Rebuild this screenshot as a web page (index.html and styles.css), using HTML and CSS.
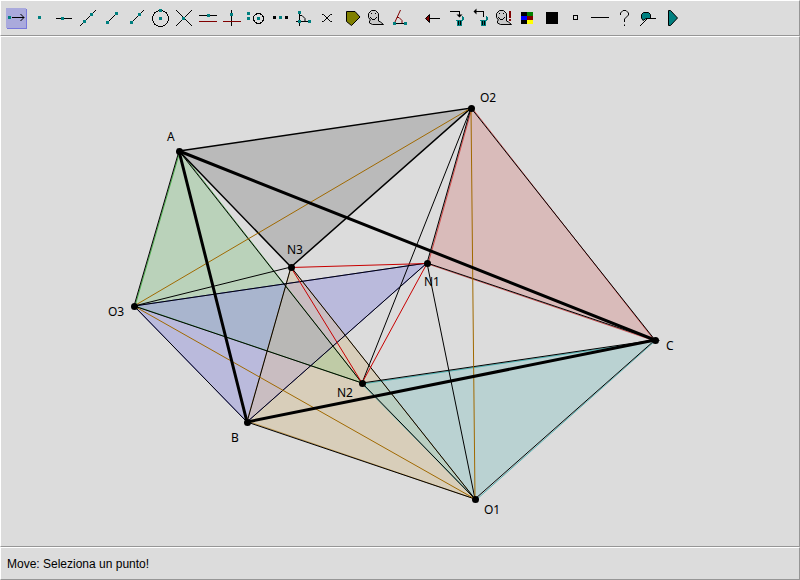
FILE: index.html
```html
<!DOCTYPE html>
<html lang="it">
<head>
<meta charset="utf-8">
<title>Geometria</title>
<link rel="stylesheet" href="styles.css">
</head>
<body>
<div class="app">
  <header class="panel toolbar">
    <div class="tools">
      <button class="tool active" aria-label="Muovi"><svg viewBox="0 0 24 24"><path class="sel-shadow" d="M3 3h20v20H3z"/><path class="sel" d="M2 2h20v20H2z"/><path class="k" d="M8 11.500h12"/><path class="k soft" d="M16.500 8l3.500 3.500-3.500 3.500"/><path class="t" d="M4 10h3v3H4z"/></svg></button>
      <button class="tool" aria-label="Punto"><svg viewBox="0 0 24 24"><path class="t" d="M10 10h3v3h-3z"/></svg></button>
      <button class="tool" aria-label="Punto su oggetto"><svg viewBox="0 0 24 24"><path class="k" d="M4 12.500h16"/><path class="t" d="M9 11h3v3H9z"/></svg></button>
      <button class="tool" aria-label="Retta"><svg viewBox="0 0 24 24"><path class="k" d="M4 20L20 4"/><path class="t" d="M7 14h3v3H7zM14 7h3v3h-3z"/></svg></button>
      <button class="tool" aria-label="Segmento"><svg viewBox="0 0 24 24"><path class="k" d="M7 17L17 7"/><path class="t" d="M6 15h3v3H6zM15 6h3v3h-3z"/></svg></button>
      <button class="tool" aria-label="Semiretta"><svg viewBox="0 0 24 24"><path class="k" d="M7 17L20 4"/><path class="t" d="M6 15h3v3H6zM14 7h3v3h-3z"/></svg></button>
      <button class="tool" aria-label="Circonferenza"><svg viewBox="0 0 24 24"><circle class="k" cx="12.500" cy="12.500" r="8"/><path class="t" d="M11 11h3v3h-3zM11 3h3v3h-3z"/></svg></button>
      <button class="tool" aria-label="Intersezione"><svg viewBox="0 0 24 24"><path class="k" d="M4 4l16 16M4 20L20 4"/><path class="t" d="M10 11h3v3h-3z"/></svg></button>
      <button class="tool" aria-label="Parallela"><svg viewBox="0 0 24 24"><path class="k" d="M3 9.500h18"/><path class="r" d="M3 15.500h18"/><path class="t" d="M11 8h3v3h-3z"/></svg></button>
      <button class="tool" aria-label="Perpendicolare"><svg viewBox="0 0 24 24"><path class="k" d="M11.500 4v16"/><path class="r" d="M3 15.500h18"/><path class="t" d="M10 7h3v3h-3z"/></svg></button>
      <button class="tool" aria-label="Compasso"><svg viewBox="0 0 24 24"><circle class="k" cx="14.500" cy="12.500" r="5"/><path class="t" d="M3 6h3v3H3zM3 11h3v3H3zM13 11h3v3h-3z"/></svg></button>
      <button class="tool" aria-label="Punto medio"><svg viewBox="0 0 24 24"><path class="b" d="M5 10h3v3H5zM17 10h3v3h-3z"/><path class="t" d="M11 10h3v3h-3z"/></svg></button>
      <button class="tool" aria-label="Angolo"><svg viewBox="0 0 24 24"><path class="k" d="M7.500 5v15M4 15.500h14"/><path class="k soft" d="M8 9.500h2l3 3v3"/><path class="t" d="M6 5h3v3H6zM6 14h3v3H6zM16 14h3v3h-3z"/></svg></button>
      <button class="tool" aria-label="Nascondi"><svg viewBox="0 0 24 24"><path class="k soft" d="M6 8.500h1.500l7 7H16M6 15.500h1.500l7-7H16"/></svg></button>
      <button class="tool" aria-label="Poligono"><svg viewBox="0 0 24 24"><path class="k olive soft" d="M6.500 5.500h8.500l5 5.500-8.500 8.500-5-4z"/></svg></button>
      <button class="tool" aria-label="Oggetti nascosti"><svg viewBox="0 0 24 24"><path class="k ghost soft" d="M4.500 7.500l3-3h4l3 3v7.500l2 1 3 2.500h-11l-3-1.500v-2l1-1-2-2.500z"/><path class="b" d="M7 7h1v1H7zM11 7h1v1h-1zM6 11h1v1H6zM7 12h1v1H7zM8 13h3v1H8zM11 12h1v1h-1zM12 11h1v1h-1z"/></svg></button>
      <button class="tool" aria-label="Ampiezza"><svg viewBox="0 0 24 24"><path class="k" d="M6 17.500h12"/><path class="r soft" d="M6.500 17l6-13M9 11.500h2l3 3V17"/><path class="t" d="M5 16h3v3H5zM16 16h3v3h-3z"/></svg></button>
    </div>
    <div class="tools">
      <button class="tool" aria-label="Indietro"><svg viewBox="0 0 24 24"><path class="k" d="M10 12.500h10"/><path class="k maroon soft" d="M5.500 12.500l4-4v8z"/></svg></button>
      <button class="tool" aria-label="Elimina"><svg viewBox="0 0 24 24"><path class="k" d="M6 5.500h9.500V10"/><path class="b soft" d="M12.500 8.500h6l-3 3z"/><path class="t" d="M12 14h6v6h-5v-5h-1zM18 10h1v1h1v3h-1v1h-2v-1h1z"/><path class="k" d="M14.500 15v4M16.500 15v4"/></svg></button>
      <button class="tool" aria-label="Ripristina"><svg viewBox="0 0 24 24"><path class="k" d="M7 5.500h8.500V11"/><path class="b soft" d="M5.500 5.500l3-3v6z"/><path class="t" d="M12 14h6v6h-5v-5h-1zM18 10h1v1h1v3h-1v1h-2v-1h1z"/><path class="k" d="M14.500 15v4M16.500 15v4"/></svg></button>
      <button class="tool" aria-label="Mostra nascosti"><svg viewBox="0 0 24 24"><path class="k ghost soft" d="M4.500 7.500l3-3h4l3 3v7.500l2 1 3 2.500h-11l-3-1.500v-2l1-1-2-2.500z"/><path class="b" d="M7 7h1v1H7zM11 7h1v1h-1zM6 11h1v1H6zM7 12h1v1H7zM8 13h3v1H8zM11 12h1v1h-1zM12 11h1v1h-1z"/><path class="m" d="M17 5h2v7h-2zM17 13h2v2h-2z"/></svg></button>
      <button class="tool" aria-label="Colore"><svg viewBox="0 0 24 24"><path class="b" d="M5 6h6v4H5zM5 14h6v4H5z"/><path class="green" d="M11 6h6v4h-6z"/><path class="blue" d="M5 10h6v4H5z"/><path class="m" d="M11 10h6v4h-6z"/><path class="yellow" d="M11 14h6v4h-6z"/></svg></button>
      <button class="tool" aria-label="Colore nero"><svg viewBox="0 0 24 24"><path class="b" d="M6 6h12v12H6z"/></svg></button>
      <button class="tool" aria-label="Tipo di punto"><svg viewBox="0 0 24 24"><path class="k" d="M9.500 9.500h4v4h-4z"/></svg></button>
      <button class="tool" aria-label="Spessore"><svg viewBox="0 0 24 24"><path class="k" d="M3 11.500h18"/></svg></button>
      <button class="tool" aria-label="Aiuto"><svg viewBox="0 0 24 24"><path class="k soft" d="M8.500 9V7l2.500-2.500h3L16.500 7v2l-4 4v3M12.500 18.500v1.500"/></svg></button>
      <button class="tool" aria-label="Macro"><svg viewBox="0 0 24 24"><path class="k teal soft" d="M7 14.500L5.500 12V8.500l2-2h5l2 2v4H10z"/><path class="k" d="M10 12.500h10M4 20l7-7"/></svg></button>
      <button class="tool" aria-label="Riproduci"><svg viewBox="0 0 24 24"><path class="k teal soft" d="M8.500 4.500h2l7 7.500-7 7.500h-2z"/></svg></button>
    </div>
  </header>

  <main class="panel drawing">
    <svg class="figure" viewBox="1 37 798 509" preserveAspectRatio="xMinYMin meet">
      <defs>
        <clipPath id="in-blue"><path d="M134 306L427 263 247 422z"/></clipPath>
        <clipPath id="in-tan"><path d="M291 267L247 422 475 499z"/></clipPath>
        <clipPath id="in-cyan"><path d="M362 383L655 340 475 499z"/></clipPath>
      </defs>
      <!-- filled triangles -->
      <path class="fill-gray" d="M179 151L471 108 291 267z"/>
      <path class="fill-blue" d="M134 306L427 263 247 422z"/>
      <path class="fill-green" d="M179 151L134 306 362 383z"/>
      <path class="fill-cyan" d="M362 383L655 340 475 499z"/>
      <path class="fill-tan" d="M291 267L247 422 475 499z"/>
      <path class="fill-red" d="M471 108L427 263 655 340z"/>
      <!-- mixed colours where triangles overlap -->
      <path class="mix-green-blue" clip-path="url(#in-blue)" d="M179 151L134 306 362 383z"/>
      <path class="mix-tan-blue" clip-path="url(#in-blue)" d="M291 267L247 422 475 499z"/>
      <g clip-path="url(#in-tan)">
        <path class="mix-green-tan" d="M179 151L134 306 362 383z"/>
        <path class="mix-all" clip-path="url(#in-blue)" d="M179 151L134 306 362 383z"/>
      </g>
      <path class="mix-tan-cyan" clip-path="url(#in-cyan)" d="M291 267L247 422 475 499z"/>
      <!-- sides -->
      <path class="side-green" d="M180 151L135 306 362 383z"/>
      <path class="side-blue" d="M134 306L427 263 247 422z"/>
      <path class="side-tan" d="M291 267L247 421 475 499z"/>
      <path class="side-cyan" d="M362 384L655 341 476 500z"/>
      <path class="side-red" d="M472 108L428 264 655 341z"/>
      <path class="side-gray" d="M179 151L471 108 291 267z"/>
      <path class="thin" d="M179 151L134 306 362 383zM134 306L427 263 247 422zM291 267L247 422 475 499zM362 383L655 340 475 499zM471 108L427 263 655 340z"/>
      <path class="thin" d="M134 306L291 267M471 108L362 383M475 499L427 263"/>
      <path class="brown" d="M134 306L471 108 475 499z"/>
      <path class="red" d="M291 267.500L427 263.500 362 383z"/>
      <path class="thick" d="M179 151L655 340 247 422z"/>
      <g class="points">
        <circle cx="179.500" cy="151.500" r="3.500"/><circle cx="471.500" cy="108.500" r="3.500"/><circle cx="655.500" cy="340.500" r="3.500"/><circle cx="475.500" cy="499.500" r="3.500"/><circle cx="247.500" cy="422.500" r="3.500"/><circle cx="134.500" cy="306.500" r="3.500"/><circle cx="291.500" cy="267.500" r="3.500"/><circle cx="427.500" cy="263.500" r="3.500"/><circle cx="362.500" cy="383.500" r="3.500"/>
      </g>
      <g class="labels">
        <text x="167" y="141">A</text><text x="480" y="102">O2</text><text x="666" y="350">C</text><text x="484" y="514">O1</text><text x="231" y="442">B</text><text x="108" y="316">O3</text><text x="287" y="254">N3</text><text x="424" y="286">N1</text><text x="337" y="397">N2</text>
      </g>
    </svg>
  </main>

  <footer class="panel status">Move: Seleziona un punto!</footer>
</div>
</body>
</html>
```
FILE: styles.css
```css
* { box-sizing: border-box; }
body {
  margin: 0;
  background: #dcdcdc;
  color: #000;
  font-family: "Liberation Sans", Arial, sans-serif;
  font-size: 12px;
}
.app {
  display: flex;
  flex-direction: column;
  min-height: 100vh;
}
.panel {
  border: 1px solid;
  border-color: #fff #969696 #969696 #fff;
  background: #dcdcdc;
}
.toolbar {
  display: flex;
  flex-wrap: wrap;
  gap: 8px;
  padding: 5px 3px;
}
.tools { display: flex; flex-wrap: wrap; }
.tool {
  width: 24px;
  height: 24px;
  padding: 0;
  border: 0;
  background: none;
}
.tool svg {
  display: block;
  width: 24px;
  height: 24px;
  shape-rendering: crispEdges;
}
.soft { shape-rendering: geometricPrecision; }
.k { fill: none; stroke: #000; }
.r { fill: none; stroke: #800000; }
.t { fill: #008080; }
.b { fill: #000; }
.m, .maroon { fill: #800000; }
.olive { fill: #808000; }
.ghost { fill: #c8c8c8; }
.teal { fill: #008080; }
.green { fill: #008000; }
.blue { fill: #00f; }
.yellow { fill: #ff0; }
.sel { fill: #aaaadc; }
.sel-shadow { fill: #7878dc; }

.drawing { flex: 1; }
.figure { display: block; width: 100%; }
.fill-gray { fill: #bababa; }
.fill-green { fill: #bad2ba; }
.fill-blue { fill: #babadc; }
.fill-tan { fill: #d8ceba; }
.fill-cyan { fill: #bad2d2; }
.fill-red { fill: #d9bbba; }
.mix-green-blue { fill: #a9b5ce; }
.mix-tan-blue { fill: #c9bdc1; }
.mix-green-tan { fill: #bfcba6; }
.mix-all { fill: #b9b8b6; }
.mix-tan-cyan { fill: #bacfc2; }
[class^="side-"] { fill: none; stroke-width: 1; stroke-opacity: 0.6; }
.side-gray { stroke: #000; }
.side-green { stroke: #009600; }
.side-blue { stroke: #0000c8; }
.side-tan { stroke: #aa6e00; }
.side-cyan { stroke: #009696; }
.side-red { stroke: #c80000; }
.side-gray { stroke-opacity: 1; stroke-width: 1.5; }
.thin { fill: none; stroke: #000; stroke-width: 1; }
.brown { fill: none; stroke: #a06900; stroke-width: 1; }
.red { fill: none; stroke: #c80000; stroke-width: 1; }
.thick { fill: none; stroke: #000; stroke-width: 3; }
.labels { font-family: "Noto Sans", sans-serif; font-size: 12px; }

.status {
  padding: 9px 6px 7px;
  line-height: 15px;
}
```
